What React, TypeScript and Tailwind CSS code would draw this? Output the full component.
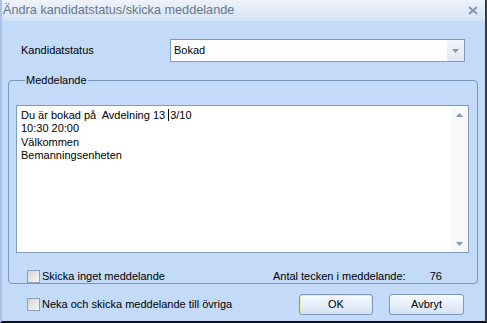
import React from "react";

const Checkbox = () => (
  <span className="inline-block w-[13px] h-[13px] border border-[#8e9fb6] bg-gradient-to-br from-[#d4d4d4] to-[#f7f7f7] shrink-0" />
);

const Arrow = ({ up }: { up?: boolean }) => (
  <svg width="7" height="4" viewBox="0 0 7 4">
    <path d={up ? "M0 4 L3.5 0 L7 4 Z" : "M0 0 L3.5 4 L7 0 Z"} fill="#8b97a8" />
  </svg>
);

const DialogButton = ({ label, focused }: { label: string; focused?: boolean }) => (
  <button
    className={
      "h-[21px] border border-[#7c97bd] rounded-[3px] bg-gradient-to-b from-[#f7faff] to-[#d6e3f3] text-[11px] text-black " +
      (focused ? "w-[74px] shadow-[inset_0_0_0_1px_#e9eba6]" : "w-[75px]")
    }
  >
    {label}
  </button>
);

export default function App() {
  return (
    <div className="w-[487px] h-[323px] flex flex-col bg-[#c3daf9] border-l-2 border-l-[#a9c4e8] border-r-2 border-r-[#3b3b3b] border-b-2 border-b-[#111111] font-['Liberation_Sans',Arial,sans-serif] text-[11px] text-black">
      {/* title bar */}
      <div className="h-[21px] flex items-center justify-between pl-[1px] pr-[7px] bg-gradient-to-b from-[#eef3fb] to-[#d3e2f6]">
        <span className="text-[12.7px] text-[#6a7789]">Ändra kandidatstatus/skicka meddelande</span>
        <svg width="10" height="9" viewBox="0 0 10 9">
          <path d="M1 1 L9 8 M9 1 L1 8" stroke="#8a96a6" strokeWidth="2" />
        </svg>
      </div>

      {/* status row */}
      <div className="flex items-center mt-[18px] pl-[19px]">
        <span className="w-[149px] text-[11px]">Kandidatstatus</span>
        <div className="w-[295px] h-[23px] flex border border-[#7f9db9] bg-white">
          <span className="flex-1 pl-[3px] text-[11px] leading-[21px]">Bokad</span>
          <div className="w-[17px] flex items-center justify-center bg-gradient-to-b from-[#f3f6fb] to-[#e1e8f2]">
            <Arrow />
          </div>
        </div>
      </div>

      {/* message group */}
      <fieldset className="ml-[6px] mt-[12px] w-[470px] h-[210px] border border-[#7a97c0] rounded-[4px] pl-[7px] pr-[8px] pb-[5px] flex flex-col">
        <legend className="ml-[9px] px-[1px] text-[11px] leading-[13px]">Meddelande</legend>
        <div className="mt-[18px] h-[148px] flex border border-[#7f9db9] bg-white">
          <div className="flex-1 pl-[4px] pt-[3px] text-[11px] leading-[13.4px] whitespace-pre">
            <div>
              Du är bokad på  Avdelning 13 <span className="inline-block w-px h-[12px] bg-black align-[-2px] mr-[1px]" />3/10
            </div>
            <div>10:30 20:00</div>
            <div>Välkommen</div>
            <div>Bemanningsenheten</div>
          </div>
          <div className="w-[17px] flex flex-col justify-between bg-[#f7f8fa]">
            <div className="h-[17px] flex items-center justify-center">
              <Arrow up />
            </div>
            <div className="h-[17px] flex items-center justify-center">
              <Arrow />
            </div>
          </div>
        </div>
        <div className="flex items-center mt-[15px] pl-[11px]">
          <Checkbox />
          <span className="ml-[2px]">Skicka inget meddelande</span>
          <span className="ml-[108px]">Antal tecken i meddelande:</span>
          <span className="ml-[24px]">76</span>
        </div>
      </fieldset>

      {/* bottom row */}
      <div className="flex items-center mt-[10px] pl-[25px] pr-[21px]">
        <Checkbox />
        <span className="ml-[2px]">Neka och skicka meddelande till övriga</span>
        <div className="ml-auto flex gap-[16px]">
          <DialogButton label="OK" focused />
          <DialogButton label="Avbryt" />
        </div>
      </div>
    </div>
  );
}
